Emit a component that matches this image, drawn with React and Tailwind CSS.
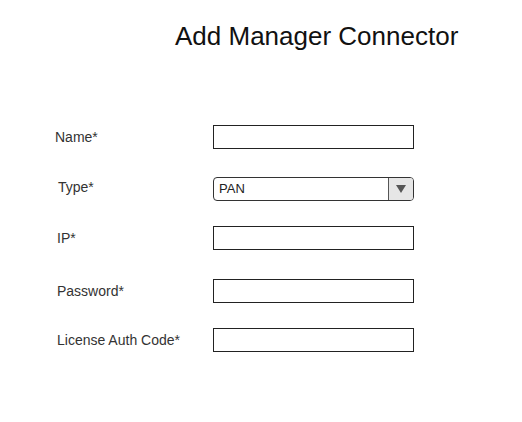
export default function App() {
  const font = { fontFamily: '"Liberation Sans", Arial, sans-serif' };
  return (
    <div className="w-[522px] h-[422px] bg-white text-black" style={font}>
      <div className="pt-[21px] pl-[175px] text-[26px] leading-[30px] text-[#111]">Add Manager Connector</div>
      <div className="mt-[74px] flex flex-col">
        <div className="flex items-center h-[24px]">
          <div className="w-[213px] pl-[55px] text-[14px] leading-[16px] text-[#333]">Name*</div>
          <div className="w-[201px] h-[24px] border border-[#222]"></div>
        </div>
        <div className="flex items-center h-[24px] mt-[28px]">
          <div className="w-[213px] pl-[58px] pb-[5px] text-[14px] leading-[16px] text-[#333]">Type*</div>
          <div className="w-[201px] h-[24px] border border-[#333] rounded-[4px] flex overflow-hidden">
            <div className="flex-1 flex items-center pl-[5px] text-[13px] text-[#222]">PAN</div>
            <div className="w-[25px] h-full bg-[#e6e6e6] border-l border-[#555] flex items-center justify-center">
              <svg width="10" height="8" viewBox="0 0 10 8">
                <polygon points="0,0 10,0 5,8" fill="#555" />
              </svg>
            </div>
          </div>
        </div>
        <div className="flex items-center h-[24px] mt-[25px]">
          <div className="w-[213px] pl-[57px] text-[14px] leading-[16px] text-[#333]">IP*</div>
          <div className="w-[201px] h-[24px] border border-[#222]"></div>
        </div>
        <div className="flex items-center h-[24px] mt-[29px]">
          <div className="w-[213px] pl-[57px] text-[14px] leading-[16px] text-[#333]">Password*</div>
          <div className="w-[201px] h-[24px] border border-[#222]"></div>
        </div>
        <div className="flex items-center h-[24px] mt-[25px]">
          <div className="w-[213px] pl-[57px] text-[14px] leading-[16px] text-[#333]">License Auth Code*</div>
          <div className="w-[201px] h-[24px] border border-[#222]"></div>
        </div>
      </div>
    </div>
  );
}
